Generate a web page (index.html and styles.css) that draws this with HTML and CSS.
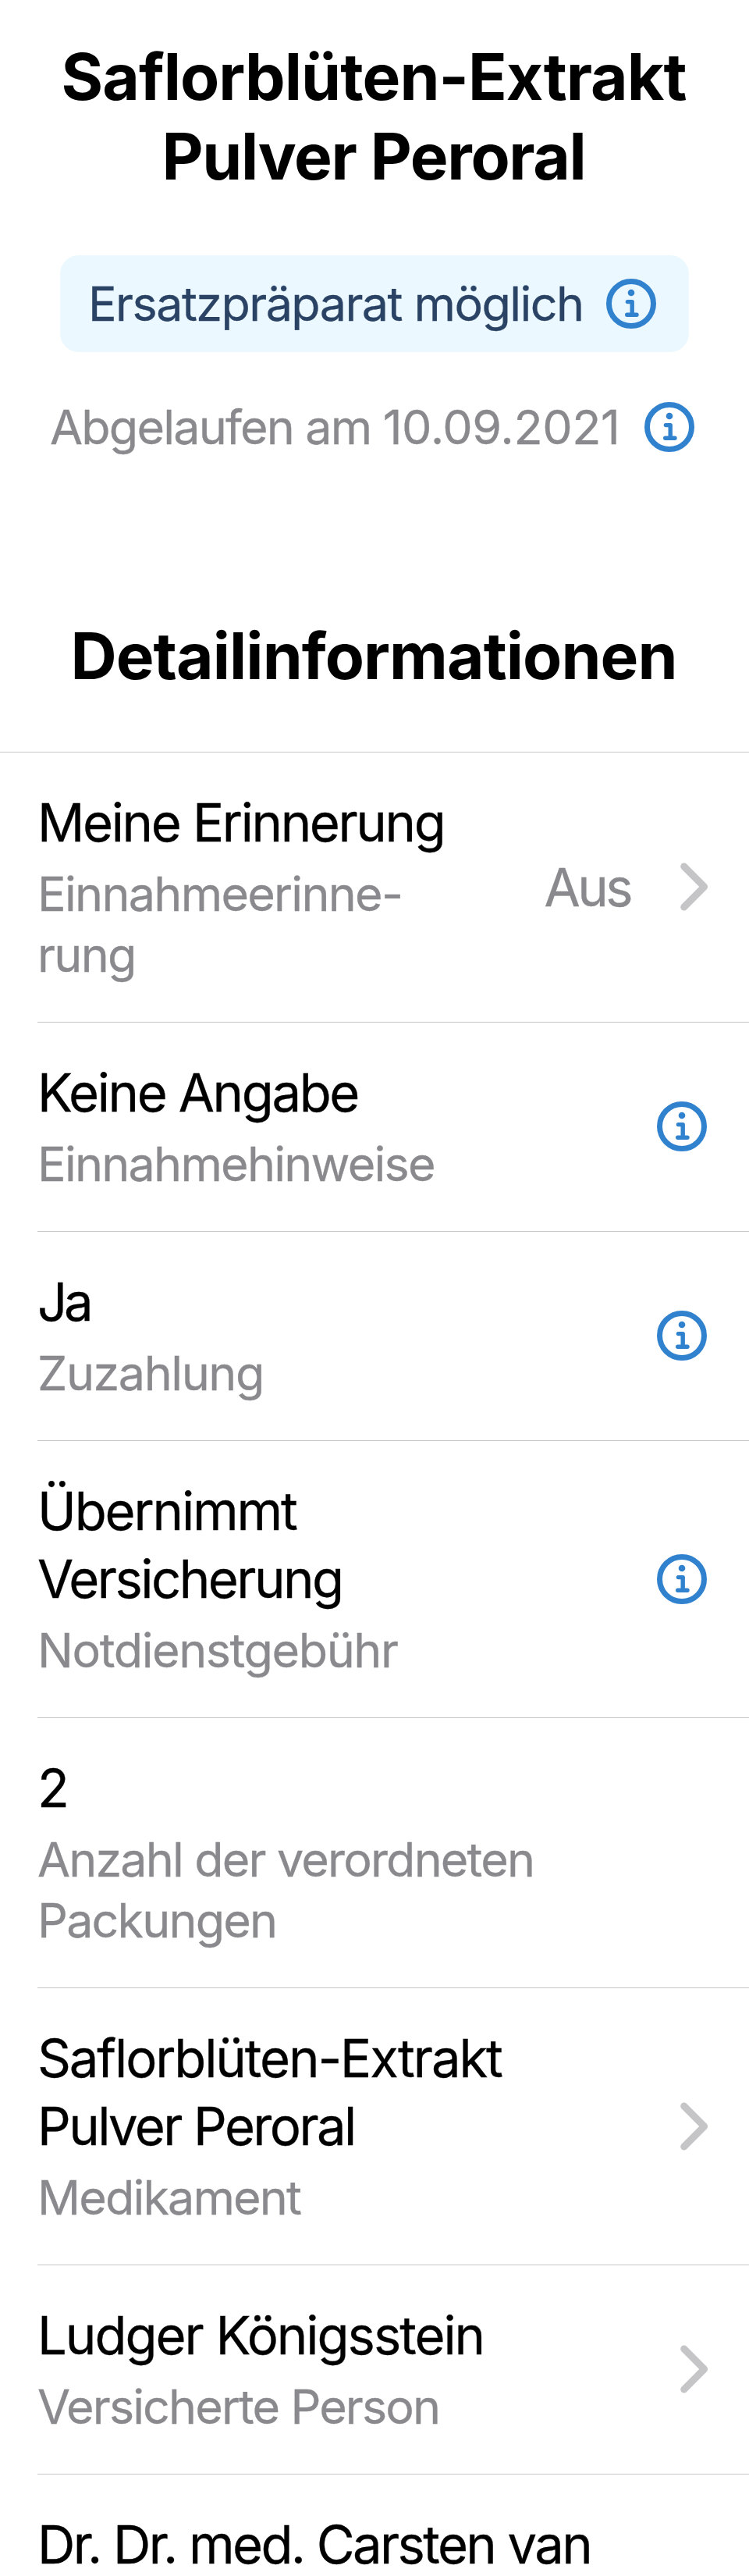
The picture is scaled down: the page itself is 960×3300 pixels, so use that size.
FILE: index.html
```
<!DOCTYPE html>
<html lang="de">
<head>
<meta charset="utf-8">
<title>Detailinformationen</title>
<link rel="stylesheet" href="styles.css">
</head>
<body>
<svg class="defs" aria-hidden="true">
  <symbol id="info" viewBox="-32 -32 64 64">
    <circle r="28.5" fill="none" stroke="currentColor" stroke-width="7"/>
    <circle cy="-14" r="4.3" fill="currentColor"/>
    <path d="M-4.6 -2.4H1.2V14.2M-5.3 14.2H7" fill="none" stroke="currentColor" stroke-width="5.4" stroke-linecap="round" stroke-linejoin="round"/>
  </symbol>
  <symbol id="chevron" viewBox="0 0 36 62">
    <path d="M4.7 5L30.6 31L4.7 57" fill="none" stroke="currentColor" stroke-width="9" stroke-linecap="round" stroke-linejoin="round"/>
  </symbol>
</svg>
<main class="page">
  <header class="head">
    <h1 class="title"><span class="t-name">Saflorblüten-Extrakt</span><br><span class="t-form">Pulver Peroral</span></h1>
    <div class="badge"><span class="badge-text">Ersatzpräparat möglich</span><svg class="info"><use href="#info"/></svg></div>
    <div class="expiry"><span class="expiry-text">Abgelaufen am <span class="date">10.09.2021</span></span><svg class="info"><use href="#info"/></svg></div>
  </header>
  <h2 class="title section"><span class="t-name">Detailinformationen</span></h2>
  <section class="list">
    <div class="row reminder">
      <div class="text"><p class="name">Meine Erinnerung</p><p class="label">Einnahmeerinne-<br>rung</p></div>
      <span class="value">Aus</span><svg class="chevron"><use href="#chevron"/></svg>
    </div>
    <div class="row dosage">
      <div class="text"><p class="name">Keine Angabe</p><p class="label">Einnahmehinweise</p></div>
      <svg class="info"><use href="#info"/></svg>
    </div>
    <div class="row copay">
      <div class="text"><p class="name">Ja</p><p class="label">Zuzahlung</p></div>
      <svg class="info"><use href="#info"/></svg>
    </div>
    <div class="row fee">
      <div class="text"><p class="name"><span class="loose">Übernimmt</span><br>Versicherung</p><p class="label">Notdienstgebühr</p></div>
      <svg class="info"><use href="#info"/></svg>
    </div>
    <div class="row amount">
      <div class="text"><p class="name">2</p><p class="label">Anzahl der verordneten<br>Packungen</p></div>
    </div>
    <div class="row drug">
      <div class="text"><p class="name"><span class="loose">Saflorblüten-Extrakt</span><br>Pulver Peroral</p><p class="label">Medikament</p></div>
      <svg class="chevron"><use href="#chevron"/></svg>
    </div>
    <div class="row person">
      <div class="text"><p class="name">Ludger Königsstein</p><p class="label">Versicherte Person</p></div>
      <svg class="chevron"><use href="#chevron"/></svg>
    </div>
    <div class="row doctor">
      <div class="text"><p class="name">Dr. Dr. med. Carsten van</p></div>
    </div>
  </section>
</main>
</body>
</html>
```
FILE: styles.css
```
* { box-sizing: border-box; }
body { margin: 0; background: #fff; }
h1, h2, p { margin: 0; }
.defs { display: none; }

.page {
  width: 960px;
  height: 3300px;
  overflow: hidden;
  background: #fff;
  color: #000;
  font-family: Inter, "Liberation Sans", sans-serif;
  white-space: nowrap;
  -webkit-text-stroke: 0.3px currentColor;
}

.head { padding-top: 48px; }
.title { padding-right: 2px; font-size: 82px; line-height: 102px; font-weight: 700; text-align: center; -webkit-text-stroke: 0; }
.t-name { letter-spacing: -0.93px; }
.t-form { letter-spacing: -1.34px; }

.badge, .expiry { display: flex; align-items: center; justify-content: space-between; font-size: 61px; line-height: 78px; }
.badge {
  width: 806px;
  height: 124px;
  margin: 75px 0 0 77px;
  padding: 0 42px 0 36px;
  border-radius: 24px;
  background: #ebf8ff;
  color: #2a4365;
}
.badge-text { letter-spacing: -1.55px; }
.expiry { margin: 57px 70px 0 64px; color: #8a8a8e; }
.expiry-text { letter-spacing: -1.8px; }
.date { letter-spacing: -0.4px; }

.info { flex: none; width: 64px; height: 64px; color: #3182ce; }
.chevron { flex: none; width: 36px; height: 62px; color: #c5c5c7; }

.section { margin-top: 204px; padding-bottom: 71px; border-bottom: 1px solid #c6c6c8; }

.row {
  display: flex;
  align-items: center;
  margin-left: 48px;
  padding: 46px 54px 47px 0;
  border-bottom: 1px solid #c6c6c8;
}
.row .chevron { margin-right: -2px; }
.text { flex: 1; display: flex; flex-direction: column; gap: 9px; }
.name, .value { font-size: 67px; line-height: 87px; letter-spacing: -2.4px; }
.label { font-size: 61px; line-height: 78px; letter-spacing: -1.7px; color: #8a8a8e; }
.value { margin-right: 64px; color: #8a8a8e; letter-spacing: -3.6px; }

.dosage .label { letter-spacing: -1.74px; }
.copay .name { letter-spacing: -4.2px; }
.copay .label { letter-spacing: -1.42px; }
.fee .name { letter-spacing: -2.55px; }
.fee .loose { letter-spacing: -2.18px; }
.fee .label { letter-spacing: -1.4px; }
.amount .label { letter-spacing: -1.82px; }
.drug .name { letter-spacing: -2.62px; }
.drug .loose { letter-spacing: -2.12px; }
.drug .label { letter-spacing: -1.84px; }
.person .name { letter-spacing: -2.05px; }
.person .label { letter-spacing: -1.88px; }
.doctor { border-bottom: 0; }
.doctor .name { letter-spacing: -2.64px; }
```
